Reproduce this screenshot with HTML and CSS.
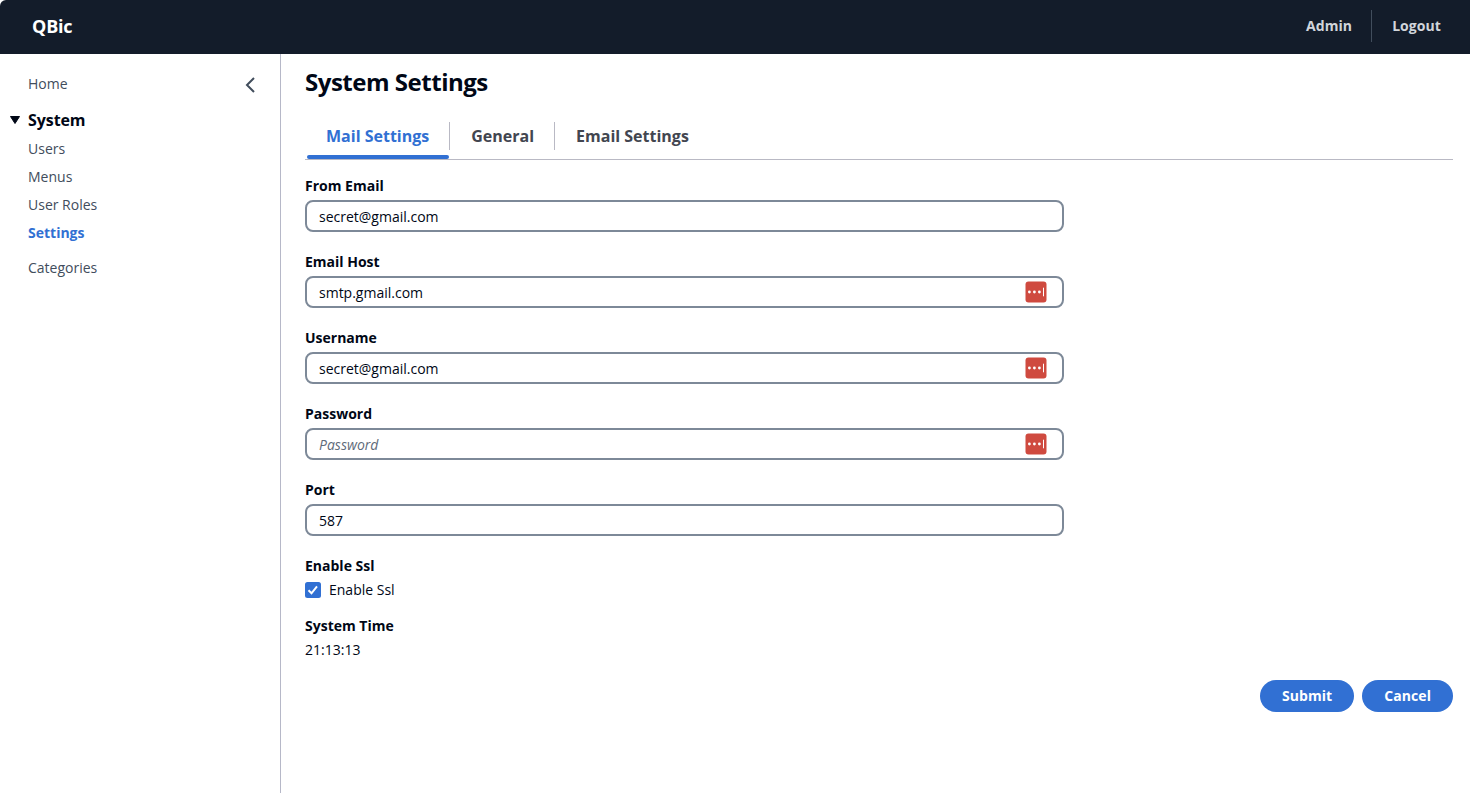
FILE: index.html
```html
<!DOCTYPE html>
<html lang="en">
<head>
<meta charset="utf-8">
<title>QBic</title>
<link rel="stylesheet" href="styles.css">
</head>
<body>
<svg class="defs" width="0" height="0">
  <symbol id="vault" viewBox="0 0 22 22">
    <rect x="0.5" y="0.5" width="21" height="21" rx="3" fill="#cf4a3f"/>
    <circle cx="4.4" cy="11" r="1.4" fill="#fff"/>
    <circle cx="9.4" cy="11" r="1.4" fill="#fff"/>
    <circle cx="14.4" cy="11" r="1.4" fill="#fff"/>
    <rect x="18" y="6.7" width="1" height="8.6" fill="#fff"/>
  </symbol>
</svg>
<header class="topbar">
  <a class="brand">QBic</a>
  <nav class="utils"><a>Admin</a><span class="divider"></span><a>Logout</a></nav>
</header>
<div class="layout">
  <aside class="sidebar">
    <nav class="menu">
      <a class="item home">Home</a>
      <div class="section"><svg class="caret" width="12" height="10" viewBox="0 0 12 10"><path d="M1.5 1.5h9L6 8.5z" fill="#000716" stroke="#000716" stroke-linejoin="round"/></svg>System</div>
      <a class="item">Users</a>
      <a class="item">Menus</a>
      <a class="item">User Roles</a>
      <a class="item active">Settings</a>
      <a class="item last">Categories</a>
    </nav>
    <svg class="collapse" width="16" height="16" viewBox="0 0 16 16"><path d="M12 1L5 8l7 7" fill="none" stroke="#414d5c" stroke-width="2"/></svg>
  </aside>
  <main class="content">
    <h1>System Settings</h1>
    <div class="tabs">
      <a class="tab selected"><span>Mail Settings</span></a>
      <a class="tab"><span>General</span></a>
      <a class="tab"><span>Email Settings</span></a>
    </div>
    <form class="form">
      <div class="field"><label>From Email</label><div class="input">secret@gmail.com</div></div>
      <div class="field"><label>Email Host</label><div class="input">smtp.gmail.com<svg class="vault"><use href="#vault"/></svg></div></div>
      <div class="field"><label>Username</label><div class="input">secret@gmail.com<svg class="vault"><use href="#vault"/></svg></div></div>
      <div class="field"><label>Password</label><div class="input"><span class="placeholder">Password</span><svg class="vault"><use href="#vault"/></svg></div></div>
      <div class="field"><label>Port</label><div class="input">587</div></div>
      <div class="field tight"><label>Enable Ssl</label>
        <div class="check"><svg width="16" height="16" viewBox="0 0 16 16"><rect width="16" height="16" rx="2.5" fill="#3170d3"/><path d="M3.5 8.3l3 3 5.5-7" fill="none" stroke="#fff" stroke-width="2"/></svg>Enable Ssl</div></div>
      <div class="field"><label>System Time</label><div class="value">21:13:13</div></div>
    </form>
    <div class="actions"><button class="btn">Submit</button><button class="btn">Cancel</button></div>
  </main>
</div>
</body>
</html>
```
FILE: styles.css
```css
* { box-sizing: border-box; }
html { background: #fff; }
body { margin: 0; font: 14px/20px "Open Sans", sans-serif; color: #000716; background: #fff; }
.defs { display: none; }
.topbar { height: 54px; padding: 0 29px 2px 32px; display: flex; align-items: center; justify-content: space-between; background: #131c2a; border-top-left-radius: 6px; }
.brand { font-size: 18px; font-weight: 700; letter-spacing: -0.18px; color: #fff; }
.utils { display: flex; align-items: center; font-weight: 700; color: #d1d5db; letter-spacing: 0.07px; }
.divider { width: 1px; height: 32px; margin: 0 20px 0 19px; background: #414d5c; }
.layout { display: flex; height: 739px; }
.sidebar { width: 281px; flex: none; padding: 20px 22px 0 9px; display: flex; justify-content: space-between; border-right: 1px solid #b6b8c8; }
.menu { display: flex; flex-direction: column; }
.item { margin: 0 0 8px 19px; color: #414d5c; }
.home { margin-bottom: 14px; }
.section { display: flex; align-items: center; gap: 7px; height: 24px; margin-bottom: 7px; font-size: 16px; font-weight: 700; letter-spacing: -0.08px; }
.active { font-weight: 700; color: #3170d3; }
.last { margin-top: 7px; }
.collapse { margin-top: 3px; }
.content { flex: 1; padding: 13px 17px 0 24px; }
h1 { margin: 0; font-size: 24px; line-height: 30px; font-weight: 700; letter-spacing: -0.48px; }
.tabs { display: flex; height: 47px; margin-top: 16px; border-bottom: 1px solid #b9b9c4; }
.tab { position: relative; padding-top: 9px; color: #424650; font-size: 16px; font-weight: 700; }
.tab span { display: block; height: 28px; padding: 0 20px 0 21px; line-height: 28px; border-right: 1px solid #b9b9c4; }
.tab:last-child span { border-right: 0; }
.tab.selected { color: #3170d3; }
.selected::after { content: ""; position: absolute; left: 2px; right: 1px; bottom: 0; height: 4px; border-radius: 2px; background: #3170d3; }
.form { width: 759px; padding-top: 16px; }
.field { margin-bottom: 20px; }
.field label { display: block; margin-bottom: 4px; font-weight: 700; }
.tight { margin-bottom: 16px; }
.input { display: flex; justify-content: space-between; height: 32px; padding: 5px 15px 0 12px; border: 2px solid #7d8998; border-radius: 8px; }
.vault { width: 22px; height: 22px; margin-top: -2px; }
.placeholder { font-style: italic; color: #5f6b7a; }
.check { display: flex; align-items: center; gap: 8px; }
.actions { display: flex; justify-content: flex-end; gap: 8px; }
.btn { height: 32px; padding: 0 22px; border: 0; border-radius: 16px; background: #3170d3; color: #fff; font: 700 14px/20px "Open Sans", sans-serif; letter-spacing: 0.07px; }
```
